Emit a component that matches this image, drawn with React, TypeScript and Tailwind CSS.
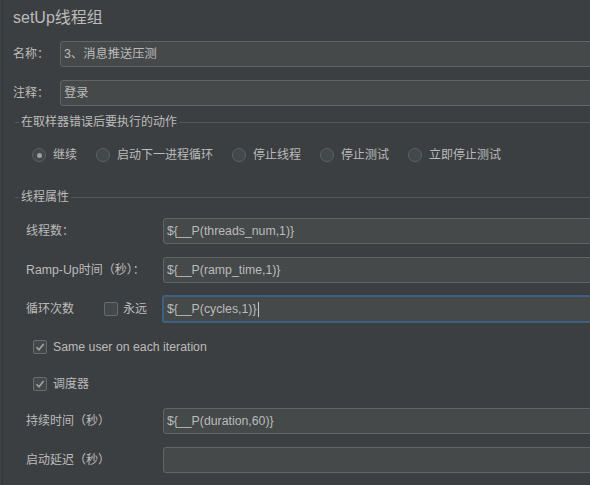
import React from "react";

const font = { fontFamily: '"Liberation Sans", "Noto Sans CJK SC", sans-serif' };

function Input({ value, focused, caret }: { value?: string; focused?: boolean; caret?: boolean }) {
  return (
    <div
      className={
        "flex-1 flex items-center rounded-[3px] bg-[#45494a] pl-[3px] mr-[-6px] text-[12.3px] text-[#bbbbbb] " +
        (focused ? "border-2 border-[#3d6185] h-[28px] pl-[3px]" : "border border-[#646464] h-[26px]")
      }
    >
      <span className="whitespace-nowrap">{value}</span>
      {caret && <span className="ml-[1px] w-px h-[15px] bg-[#c8c8c8]" />}
    </div>
  );
}

function Radio({ checked, label }: { checked?: boolean; label: string }) {
  return (
    <div className="flex items-center">
      <div className="w-[14px] h-[14px] rounded-full border border-[#5e6162] bg-[#43494a] flex items-center justify-center">
        {checked && <div className="w-[5px] h-[5px] rounded-full bg-[#a0a0a0]" />}
      </div>
      <span className="ml-[7px] text-[12px] text-[#bbbbbb] leading-[16px]">{label}</span>
    </div>
  );
}

function Check({ checked }: { checked?: boolean }) {
  return (
    <div className="w-[14px] h-[14px] rounded-[2px] border border-[#6b6b6b] bg-[#43494a] flex items-center justify-center">
      {checked && (
        <svg width="10" height="10" viewBox="0 0 10 10">
          <path d="M1.5 5.2 L4 7.8 L8.6 2" fill="none" stroke="#a3a3a3" strokeWidth="1.6" />
        </svg>
      )}
    </div>
  );
}

function GroupTitle({ title }: { title: string }) {
  return (
    <div className="flex items-center h-[16px] ml-[15px]">
      <div className="w-[4px] h-px bg-[#565858]" />
      <span className="text-[12px] text-[#bbbbbb] leading-[16px] px-[2px] whitespace-nowrap">{title}</span>
      <div className="flex-1 h-px bg-[#565858]" />
    </div>
  );
}

export default function App() {
  return (
    <div className="w-[590px] h-[485px] bg-[#3c3f41] overflow-hidden flex" style={font}>
      <div className="ml-[2px] w-px h-full bg-[#333537]" />
      <div className="flex-1 flex flex-col">
        <div className="mt-[8px] h-[20px] ml-[10px] text-[16px] leading-[20px] text-[#bbbbbb]">setUp线程组</div>

        <div className="mt-[13px] flex items-center ml-[10px]">
          <span className="w-[47px] text-[12px] text-[#bbbbbb]">名称：</span>
          <Input value="3、消息推送压测" />
        </div>
        <div className="mt-[13px] flex items-center ml-[10px]">
          <span className="w-[47px] text-[12px] text-[#bbbbbb]">注释：</span>
          <Input value="登录" />
        </div>

        <div className="mt-[8px] -ml-[3px]">
          <GroupTitle title="在取样器错误后要执行的动作" />
        </div>
        <div className="mt-[17px] h-[16px] flex items-center ml-[29px] gap-[19px]">
          <Radio checked label="继续" />
          <Radio label="启动下一进程循环" />
          <Radio label="停止线程" />
          <Radio label="停止测试" />
          <Radio label="立即停止测试" />
        </div>

        <div className="mt-[26px] -ml-[3px]">
          <GroupTitle title="线程属性" />
        </div>

        <div className="mt-[13px] flex items-center ml-[23px]">
          <span className="w-[137px] text-[12px] text-[#bbbbbb]">线程数：</span>
          <Input value="${__P(threads_num,1)}" />
        </div>
        <div className="mt-[13px] flex items-center ml-[23px]">
          <span className="w-[137px] text-[12px] text-[#bbbbbb]">
            <span className="text-[12.3px]">Ramp-Up</span>时间（秒）：
          </span>
          <Input value="${__P(ramp_time,1)}" />
        </div>
        <div className="mt-[12px] flex items-center ml-[23px]">
          <span className="w-[78px] text-[12px] text-[#bbbbbb]">循环次数</span>
          <Check />
          <span className="ml-[5px] w-[39px] text-[12px] text-[#bbbbbb]">永远</span>
          <Input value="${__P(cycles,1)}" focused caret />
        </div>

        <div className="mt-[16px] h-[16px] flex items-center ml-[30px]">
          <Check checked />
          <span className="ml-[6px] text-[12.3px] text-[#bbbbbb]">Same user on each iteration</span>
        </div>
        <div className="mt-[21px] h-[16px] flex items-center ml-[30px]">
          <Check checked />
          <span className="ml-[6px] text-[12px] text-[#bbbbbb]">调度器</span>
        </div>

        <div className="mt-[16px] flex items-center ml-[23px]">
          <span className="w-[137px] text-[12px] text-[#bbbbbb]">持续时间（秒）</span>
          <Input value="${__P(duration,60)}" />
        </div>
        <div className="mt-[13px] flex items-center ml-[23px]">
          <span className="w-[137px] text-[12px] text-[#bbbbbb]">启动延迟（秒）</span>
          <Input value="" />
        </div>
      </div>
    </div>
  );
}
